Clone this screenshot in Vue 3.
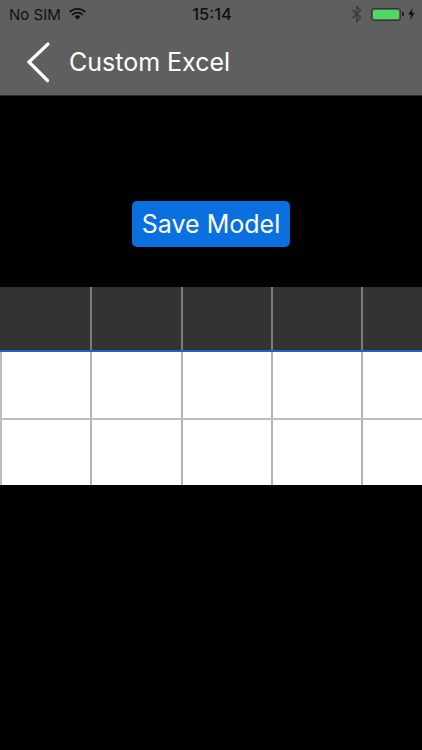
<script setup>
const columns = [0, 1, 2, 3, 4]
const rows = [0, 1]
</script>

<template>
  <div class="screen">
    <header class="topbar">
      <div class="status">
        <div class="status-left">
          <span>No SIM</span>
          <svg class="wifi" width="17" height="12" viewBox="0 0 17 12">
            <path d="M0.6 4.2 A11 11 0 0 1 16.4 4.2" fill="none" stroke="#111" stroke-width="1.7" />
            <path d="M3.2 6.8 A7.4 7.4 0 0 1 13.8 6.8" fill="none" stroke="#111" stroke-width="1.7" />
            <path d="M8.5 11.6 L5.6 8.8 A4.1 4.1 0 0 1 11.4 8.8 Z" fill="#111" />
          </svg>
        </div>
        <span class="clock">15:14</span>
        <div class="status-right">
          <svg class="bt" width="12" height="18" viewBox="0 0 11 17">
            <path d="M1.2 4.6 L9 11.8 L5.2 15.6 L5.2 1.4 L9 5.2 L1.2 12.4" fill="none" stroke="#3c3c3c" stroke-width="1.3" />
          </svg>
          <div class="battery"><div class="battery-fill"></div></div>
          <div class="battery-tip"></div>
          <svg class="bolt" width="7" height="12" viewBox="0 0 7 12">
            <path d="M4.6 0 L0.4 6.8 L3 6.8 L2.2 12 L6.6 4.8 L3.9 4.8 Z" fill="#111" />
          </svg>
        </div>
      </div>
      <div class="nav">
        <svg class="back" width="26" height="42" viewBox="0 0 26 42">
          <path d="M23 3 L4 21 L22.5 39.5" fill="none" stroke="#fff" stroke-width="3.2" stroke-linecap="round" stroke-linejoin="miter" />
        </svg>
        <span class="title">Custom Excel</span>
      </div>
    </header>

    <section class="action">
      <button class="save" type="button">Save Model</button>
    </section>

    <section class="sheet">
      <div class="head-row">
        <div v-for="c in columns" :key="c" class="head-cell"></div>
      </div>
      <div v-for="r in rows" :key="r" class="row">
        <div v-for="c in columns" :key="c" class="cell"></div>
      </div>
    </section>
  </div>
</template>

<style scoped>
.screen {
  width: 422px;
  height: 750px;
  background: #000;
  overflow: hidden;
  font-family: "Inter", "Liberation Sans", sans-serif;
}
.topbar {
  height: 95px;
  background: #5f5f5f;
  border-bottom: 1px solid #2a2a2a;
  box-sizing: content-box;
}
.status {
  height: 28px;
  padding: 0 7px 0 9px;
  display: grid;
  grid-template-columns: 1fr auto 1fr;
  align-items: center;
  font-size: 15px;
  color: #111;
}
.status-left {
  display: flex;
  align-items: center;
  gap: 8px;
}
.clock {
  font-size: 16.5px;
  font-weight: 500;
}
.status-right {
  display: flex;
  align-items: center;
  justify-content: flex-end;
}
.bt {
  margin-right: 8px;
}
.battery {
  width: 30px;
  height: 13px;
  box-sizing: border-box;
  border: 1px solid #2e3a30;
  border-radius: 3px;
  padding: 1px;
}
.battery-fill {
  height: 100%;
  background: #4cd964;
  border-radius: 1.5px;
}
.battery-tip {
  width: 2px;
  height: 4px;
  margin-left: 1px;
  background: #222;
}
.bolt {
  margin-left: 4px;
}
.nav {
  height: 67px;
  display: flex;
  align-items: center;
  padding: 0 0 0 25px;
}
.back {
  flex: none;
}
.title {
  margin-left: 18px;
  color: #fff;
  font-size: 25px;
}
.action {
  height: 191px;
  display: flex;
  justify-content: center;
  align-items: flex-start;
  padding-top: 105px;
  box-sizing: border-box;
}
.save {
  width: 158px;
  height: 46px;
  border: 0;
  border-radius: 5px;
  background: #0a70e0;
  color: #fff;
  font: inherit;
  font-size: 25px;
  padding: 0;
}
.sheet {
  width: 452px;
}
.head-row,
.row {
  display: grid;
  grid-template-columns: 92px 90.5px 90px 90.5px 90px;
}
.head-row {
  height: 63px;
  background: #333;
  border-bottom: 2px solid #2160c4;
  box-sizing: content-box;
}
.head-cell {
  border-right: 2px solid #7c7c7c;
}
.row {
  height: 68px;
  background: #fff;
  border-bottom: 2px solid #bdbdbd;
  box-sizing: border-box;
}
.row:last-child {
  border-bottom: 0;
  height: 65px;
}
.cell {
  border-right: 2px solid #b4b4b4;
}
.cell:first-child {
  border-left: 2px solid #bdbdbd;
}
</style>
